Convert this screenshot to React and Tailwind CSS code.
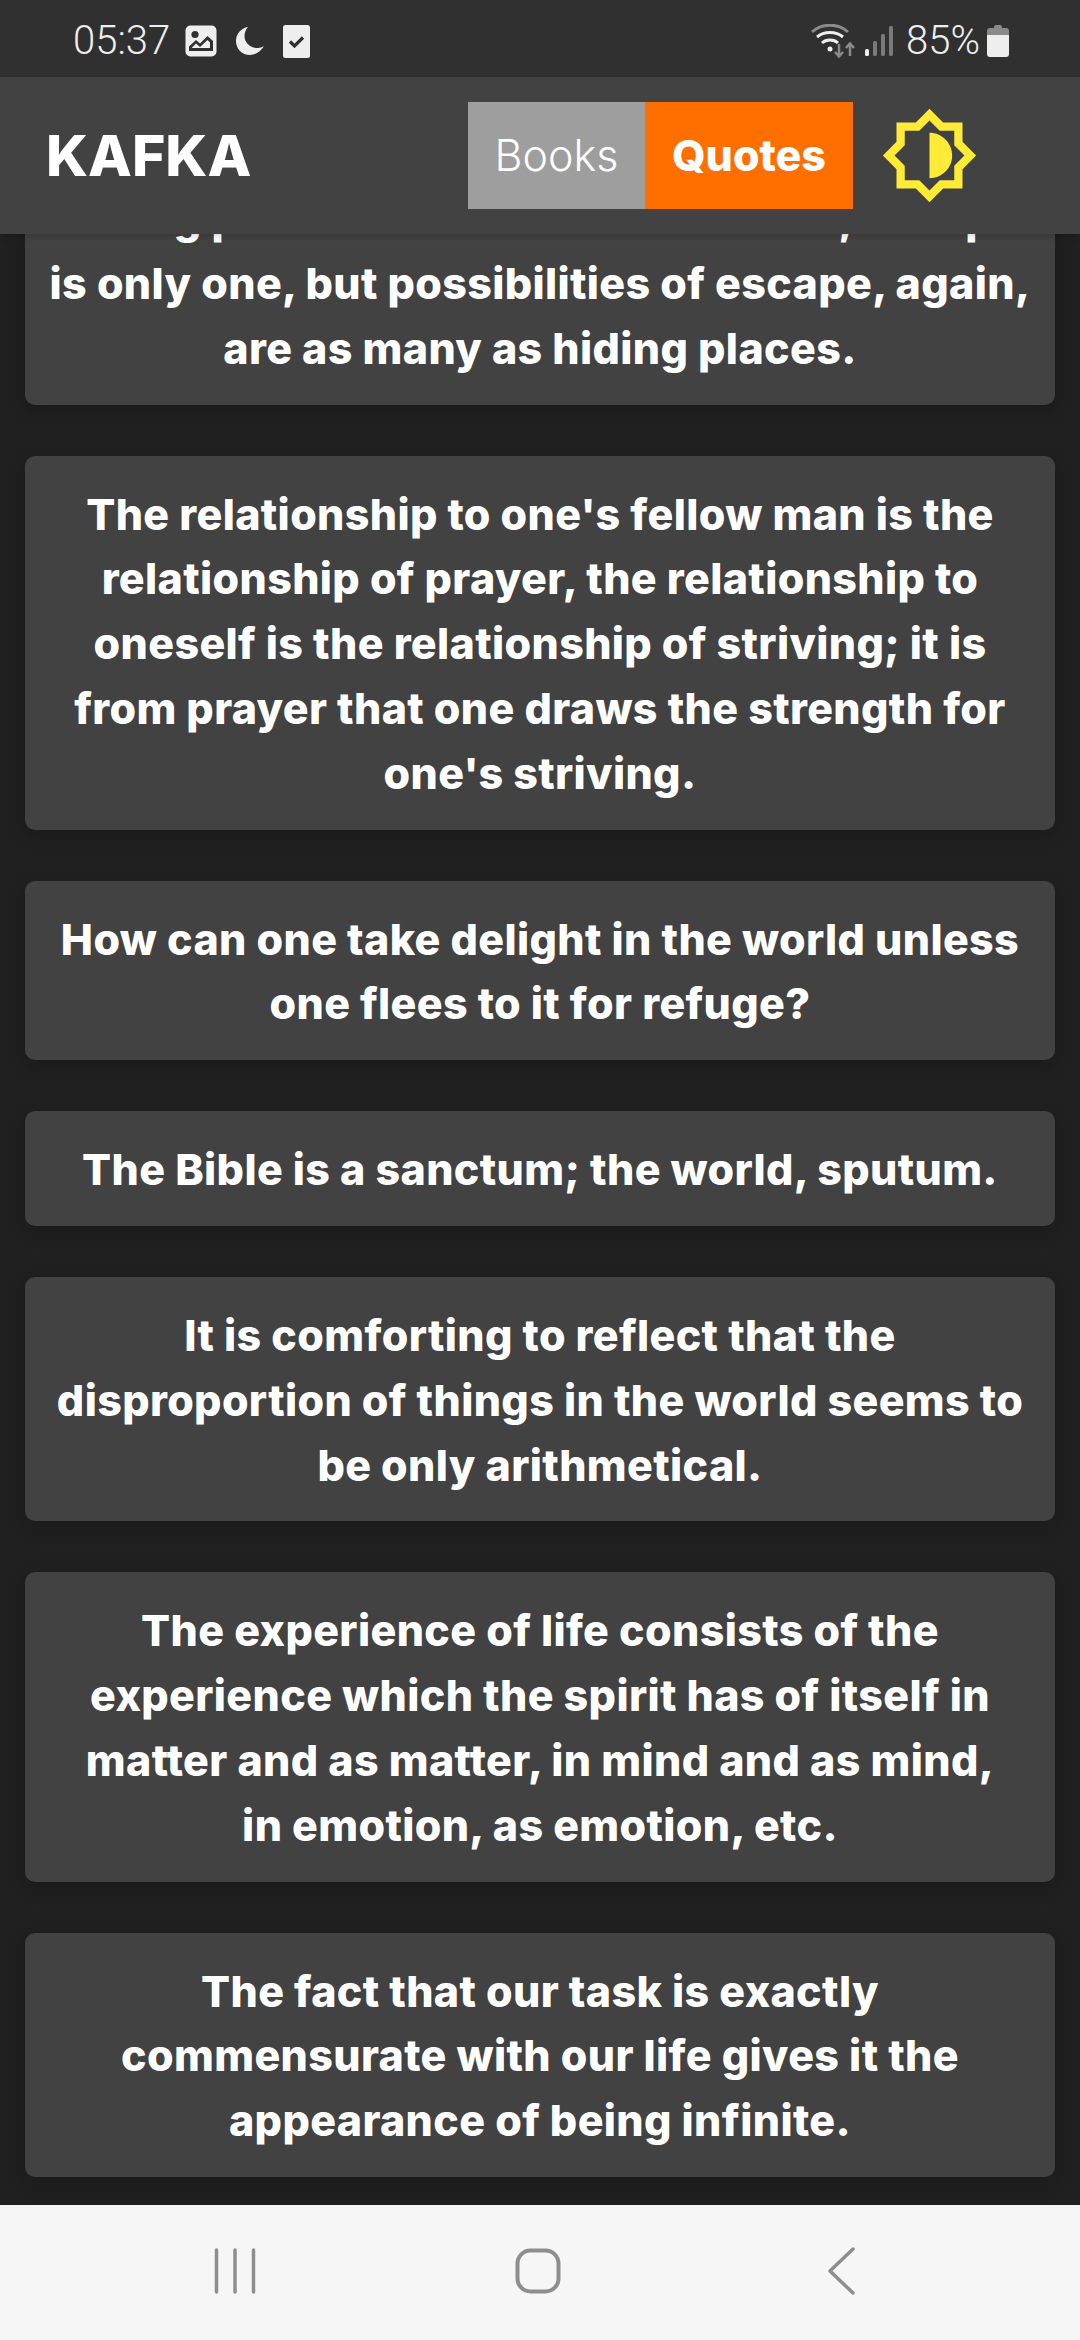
const cards = [
  ["Hiding places there are innumerable, escape", "is only one, but possibilities of escape, again,", "are as many as hiding places."],
  ["The relationship to one's fellow man is the", "relationship of prayer, the relationship to", "oneself is the relationship of striving; it is", "from prayer that one draws the strength for", "one's striving."],
  ["How can one take delight in the world unless", "one flees to it for refuge?"],
  ["The Bible is a sanctum; the world, sputum."],
  ["It is comforting to reflect that the", "disproportion of things in the world seems to", "be only arithmetical."],
  ["The experience of life consists of the", "experience which the spirit has of itself in", "matter and as matter, in mind and as mind,", "in emotion, as emotion, etc."],
  ["The fact that our task is exactly", "commensurate with our life gives it the", "appearance of being infinite."],
];

function StatusBar() {
  return (
    <div className="h-[77px] shrink-0 bg-[#303030] flex items-center justify-between pt-[5px] pl-[73px] pr-[71px] text-[#eeeeee] font-['Roboto',sans-serif]">
      <div className="flex items-center">
        <span className="text-[40px] leading-none font-light">05:37</span>
        <svg className="ml-[15px]" width="32" height="32" viewBox="0 0 32 32">
          <rect x="0.5" y="0.5" width="31" height="31" rx="5" fill="#eeeeee" />
          <circle cx="10" cy="9.5" r="3.6" fill="#303030" />
          <path d="M4 26 V21.5 L11 15 L15 18.5 L22.5 11 L28 16 V26 Z M7 23 H25 V17.5 L22.5 15 L15 22 L11 18.5 L7 22.5 Z" fill="#303030" fillRule="evenodd" />
        </svg>
        <svg className="ml-[18px]" width="30" height="30" viewBox="0 0 30 30">
          <path d="M13 1 C6 2 1 8 1 15 C1 23 7 29 15 29 C21 29 26 25 29 20 C27 21.5 24 22 22 22 C15 22 9.500 16.500 9.500 10 C9.500 6.500 11 3 13 1 Z" fill="#eeeeee" />
        </svg>
        <svg className="ml-[18px]" width="27" height="33" viewBox="0 0 27 33">
          <rect width="27" height="33" rx="2.500" fill="#eeeeee" />
          <path d="M7 16.500 L11.500 21 L20 12.500" fill="none" stroke="#303030" strokeWidth="3.200" />
        </svg>
      </div>
      <div className="flex items-center">
        <svg width="46" height="34" viewBox="0 0 46 34">
          <path d="M1 8 C11 -1 27 -1 37 8" fill="none" stroke="#8a8a8a" strokeWidth="3" />
          <path d="M6 13 C13 7 25 7 32 13" fill="none" stroke="#eeeeee" strokeWidth="3" />
          <path d="M11 19 C15 15 23 15 27 19" fill="none" stroke="#eeeeee" strokeWidth="3" />
          <circle cx="19" cy="25" r="2.500" fill="#eeeeee" />
          <path d="M28 20 V32 M24 28 L28 32.500 L32 28" fill="none" stroke="#8a8a8a" strokeWidth="2.500" />
          <path d="M39 32 V20 M35 24 L39 19.500 L43 24" fill="none" stroke="#8a8a8a" strokeWidth="2.500" />
        </svg>
        <svg className="ml-[8px]" width="28" height="30" viewBox="0 0 28 30">
          <rect x="0" y="23" width="4" height="7" rx="1.500" fill="#eeeeee" />
          <rect x="8" y="15" width="4" height="15" rx="1.500" fill="#7a7a7a" />
          <rect x="16" y="8" width="4" height="22" rx="1.500" fill="#7a7a7a" />
          <rect x="24" y="0" width="4" height="30" rx="1.500" fill="#7a7a7a" />
        </svg>
        <span className="ml-[13px] text-[40px] leading-none font-light">85%</span>
        <svg className="ml-[7px]" width="22" height="32" viewBox="0 0 22 32">
          <path d="M7 2 Q7 0 9 0 H13 Q15 0 15 2 V3 H19 Q22 3 22 6 V10 H0 V6 Q0 3 3 3 H7 Z" fill="#8a8a8a" />
          <path d="M0 10 H22 V29 Q22 32 19 32 H3 Q0 32 0 29 Z" fill="#eeeeee" />
        </svg>
      </div>
    </div>
  );
}

function Header() {
  return (
    <header className="relative z-10 h-[157px] shrink-0 bg-[#424242] shadow-md flex items-center pl-[46px] pr-[101px]">
      <h1 className="text-[57px] leading-none font-extrabold text-white">KAFKA</h1>
      <div className="ml-auto flex h-[107px]">
        <div className="w-[177px] bg-[#9e9e9e] flex items-center justify-center text-[43px] font-light text-white">Books</div>
        <div className="w-[208px] bg-[#ff6f00] flex items-center justify-center text-[43px] font-extrabold text-white">Quotes</div>
      </div>
      <svg className="ml-[27px]" width="99" height="99" viewBox="0 0 24 24" fill="#fdeb37">
        <path d="M20 15.31L23.31 12 20 8.69V4h-4.69L12 .69 8.690 4H4v4.690L.69 12 4 15.310V20h4.690L12 23.310 15.310 20H20v-4.690zM18 14.480V18h-3.520L12 20.480 9.520 18H6v-3.520L3.520 12 6 9.520V6h3.520L12 3.520 14.480 6H18v3.520L20.480 12 18 14.480zM12 6.500v11c3.030 0 5.500-2.470 5.500-5.500S15.030 6.500 12 6.500z" />
      </svg>
    </header>
  );
}

function NavBar() {
  return (
    <nav className="h-[135px] shrink-0 bg-[#f6f6f6] grid grid-cols-3 pl-[84px] pr-[88px] items-center pb-[3px]">
      <div className="flex justify-center">
        <svg width="44" height="46" viewBox="0 0 44 46">
          <path d="M3.500 2 V44 M22 2 V44 M40.500 2 V44" stroke="#8e8e8e" strokeWidth="3.500" strokeLinecap="round" fill="none" />
        </svg>
      </div>
      <div className="flex justify-center">
        <svg width="46" height="46" viewBox="0 0 46 46">
          <rect x="2.500" y="2.500" width="41" height="41" rx="13" stroke="#8e8e8e" strokeWidth="4" fill="none" />
        </svg>
      </div>
      <div className="flex justify-center">
        <svg width="28" height="48" viewBox="0 0 28 48">
          <path d="M26 2 L3 24 L26 46" stroke="#8e8e8e" strokeWidth="3.500" strokeLinecap="round" strokeLinejoin="round" fill="none" />
        </svg>
      </div>
    </nav>
  );
}

export default function App() {
  return (
    <div className="w-[1080px] h-[2340px] flex flex-col overflow-hidden bg-[#202020] font-['Inter',sans-serif]">
      <StatusBar />
      <Header />
      <main className="flex-1 min-h-0 overflow-hidden flex flex-col justify-end gap-[51px] px-[25px] pb-[28px]">
        {cards.map((lines, i) => (
          <section key={i} className="shrink-0 rounded-[10px] bg-[#424242] shadow-[0_6px_20px_rgba(0,0,0,0.2)] pt-[26px] pb-[24px] px-[20px] text-center text-white text-[43px] leading-[64.8px] font-extrabold tracking-[0.35px]">
            {lines.map((l, j) => (
              <span key={j} className="block whitespace-nowrap">{l}</span>
            ))}
          </section>
        ))}
      </main>
      <NavBar />
    </div>
  );
}
